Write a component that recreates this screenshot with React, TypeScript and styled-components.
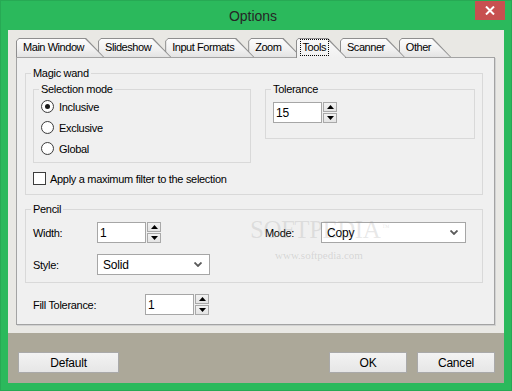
import React from 'react';
import styled, { createGlobalStyle } from 'styled-components';

const GlobalStyle = createGlobalStyle`
  html, body { margin: 0; padding: 0; background: #2bb95c; }
  body {
    font-family: "Liberation Sans", Arial, sans-serif;
    font-size: 11px;
    color: #000;
  }
  * { box-sizing: border-box; }
`;

const Window = styled.div`
  width: 512px;
  height: 391px;
  background: #2bb95c;
  border: 1px solid #27a954;
  display: flex;
  flex-direction: column;
  padding: 0 7px 7px 7px;
`;

const TitleBar = styled.div`
  height: 29px;
  margin: 0 -7px;
  padding-right: 6px;
  display: grid;
  grid-template-columns: 1fr auto 1fr;
  align-items: center;
`;

const Title = styled.div`
  grid-column: 2;
  font-size: 14px;
  color: #262626;
  padding-top: 1px;
`;

const CloseButton = styled.div`
  grid-column: 3;
  justify-self: end;
  align-self: start;
  width: 30px;
  height: 19px;
  background: #c75050;
  display: flex;
  align-items: center;
  justify-content: center;
`;

const Client = styled.div`
  flex: 1;
  background: #e9e8e4;
  display: flex;
  flex-direction: column;
`;

const TabArea = styled.div`
  padding: 8px 9px 0 8px;
`;

const TabStrip = styled.div`
  display: flex;
  height: 19px;
  align-items: flex-end;
`;

const Tab = styled.div<{ $active?: boolean; $z: number }>`
  position: relative;
  height: ${p => (p.$active ? 20 : 19)}px;
  margin-bottom: ${p => (p.$active ? -1 : 0)}px;
  align-self: flex-start;
  padding: 0 19px 0 6px;
  margin-right: -6px;
  z-index: ${p => (p.$active ? 50 : p.$z)};
  display: flex;
  align-items: flex-start;
  padding-top: 3px;
  white-space: nowrap;
  &::before {
    content: '';
    position: absolute;
    inset: 0;
    background: #8e8e8e;
    clip-path: polygon(0 3px, 3px 0, calc(100% - 18px) 0, 100% 19px, 100% 100%, 0 100%);
  }
  &::after {
    content: '';
    position: absolute;
    inset: 1px 1px 0 1px;
    background: ${p =>
      p.$active
        ? 'linear-gradient(#fafafa, #f0f0f0)'
        : 'linear-gradient(#fcfcfc 0%, #f1f1f1 55%, #e3e3e3 100%)'};
    clip-path: polygon(0 2px, 2px 0, calc(100% - 18px) 0, 100% 18px, 100% 100%, 0 100%);
  }
`;

const TabLabel = styled.span<{ $focus?: boolean }>`
  position: relative;
  z-index: 1;
  line-height: 13px;
  letter-spacing: -0.45px;
  outline: ${p => (p.$focus ? '1px dotted #000' : 'none')};
  outline-offset: 1px;
  padding: 0 1px;
`;

const Panel = styled.div`
  position: relative;
  height: 268px;
  background: #f0f0f0;
  border: 1px solid #a3a3a3;
  box-shadow: 1px 1px 0 #d2d2d2;
  padding: 9px 0 0 8px;
`;

const GroupBox = styled.fieldset<{ $w: number; $pad: string }>`
  width: ${p => p.$w}px;
  margin: 0;
  min-width: 0;
  border: 1px solid #d9d9d9;
  padding: ${p => p.$pad};
`;

const Legend = styled.legend`
  padding: 0 2px;
  margin-left: -2px;
  line-height: 13px;
  letter-spacing: -0.3px;
`;

const Row = styled.div<{ $gap?: number }>`
  display: flex;
  align-items: flex-start;
  gap: ${p => p.$gap ?? 0}px;
`;

const RadioRow = styled.label`
  height: 21px;
  display: flex;
  align-items: center;
  gap: 5px;
  letter-spacing: -0.3px;
`;

const RadioCircle = styled.span<{ $checked?: boolean }>`
  width: 13px;
  height: 13px;
  border-radius: 50%;
  border: 1px solid #3d3d3d;
  background: radial-gradient(circle at 40% 35%, #fff 0%, #fff 55%, #e8e8e8 100%);
  display: flex;
  align-items: center;
  justify-content: center;
  &::after {
    content: '';
    width: 5px;
    height: 5px;
    border-radius: 50%;
    background: ${p => (p.$checked ? '#1a1a1a' : 'transparent')};
  }
`;

const CheckRow = styled.label`
  margin-top: 9px;
  height: 13px;
  display: flex;
  align-items: center;
  gap: 4px;
  letter-spacing: -0.3px;
`;

const CheckBox = styled.span`
  width: 13px;
  height: 13px;
  border: 1px solid #3d3d3d;
  background: #fff;
`;

const NumberBox = styled.div`
  display: flex;
  gap: 1px;
  align-items: flex-start;
`;

const TextInput = styled.div`
  width: 49px;
  height: 21px;
  border: 1px solid #a6a6a6;
  background: #fff;
  padding-left: 2px;
  display: flex;
  align-items: center;
  font-size: 12px;
  letter-spacing: -0.2px;
`;

const SpinCol = styled.div`
  display: flex;
  flex-direction: column;
  gap: 1px;
`;

const SpinBtn = styled.div`
  width: 14px;
  height: 10px;
  border: 1px solid #a9a9a9;
  background: linear-gradient(#f2f2f2, #e4e4e4);
  display: flex;
  align-items: center;
  justify-content: center;
`;

const Grid = styled.div`
  display: grid;
  grid-template-columns: 64px 168px 56px auto;
  row-gap: 11px;
  align-items: center;
`;

const FieldLabel = styled.span`
  letter-spacing: -0.3px;
`;

const Select = styled.div<{ $w: number }>`
  width: ${p => p.$w}px;
  height: 21px;
  border: 1px solid #a6a6a6;
  background: #fff;
  display: flex;
  align-items: center;
  justify-content: space-between;
  padding: 0 7px 0 5px;
  font-size: 12px;
  letter-spacing: -0.2px;
`;

const FillRow = styled.div`
  margin: 11px 0 0 8px;
  display: flex;
  align-items: center;
`;

const FillLabel = styled.span`
  width: 112px;
  letter-spacing: -0.3px;
`;

const Watermark = styled.div`
  position: absolute;
  left: 233px;
  top: 159px;
  pointer-events: none;
  z-index: 5;
  display: flex;
  flex-direction: column;
  align-items: flex-start;
`;

const WatermarkBig = styled.span`
  font-family: "Liberation Serif", "Times New Roman", serif;
  font-size: 25px;
  letter-spacing: -0.5px;
  line-height: 25px;
  color: rgba(150, 150, 150, 0.22);
  position: relative;
  sup {
    font-size: 8px;
    position: absolute;
    right: -9px;
    top: -2px;
  }
`;

const WatermarkSmall = styled.span`
  margin: 7px 0 0 25px;
  font-family: "Liberation Serif", serif;
  font-size: 11px;
  color: rgba(150, 150, 150, 0.3);
`;

const ButtonBar = styled.div`
  margin-top: 8px;
  height: 50px;
  background: #aca899;
  display: flex;
  align-items: flex-start;
  padding: 19px 9px 0 10px;
  gap: 10px;
`;

const Button = styled.div<{ $w: number }>`
  width: ${p => p.$w}px;
  height: 21px;
  border: 1px solid #a9a9a9;
  background: linear-gradient(#f3f3f3, #e6e6e6);
  display: flex;
  align-items: center;
  justify-content: center;
  font-size: 12px;
  letter-spacing: -0.2px;
`;

const Spacer = styled.div`
  flex: 1;
`;

const Up = () => (
  <svg width="7" height="4" viewBox="0 0 7 4"><path d="M0 4 L3.5 0 L7 4 Z" fill="#000" /></svg>
);
const Down = () => (
  <svg width="7" height="4" viewBox="0 0 7 4"><path d="M0 0 L3.5 4 L7 0 Z" fill="#000" /></svg>
);
const Chevron = () => (
  <svg width="8" height="5" viewBox="0 0 8 5"><path d="M0.5 0.5 L4 4 L7.5 0.5" stroke="#5a5a5a" strokeWidth="1.8" fill="none" /></svg>
);

const Spinner: React.FC<{ value: string }> = ({ value }) => (
  <NumberBox>
    <TextInput>{value}</TextInput>
    <SpinCol>
      <SpinBtn><Up /></SpinBtn>
      <SpinBtn><Down /></SpinBtn>
    </SpinCol>
  </NumberBox>
);

const tabs = ['Main Window', 'Slideshow', 'Input Formats', 'Zoom', 'Tools', 'Scanner', 'Other'];

export default function App() {
  return (
    <>
      <GlobalStyle />
      <Window>
        <TitleBar>
          <Title>Options</Title>
          <CloseButton>
            <svg width="10" height="9" viewBox="0 0 10 9">
              <path d="M1 0.5 L9 8.5 M9 0.5 L1 8.5" stroke="#fff" strokeWidth="2" />
            </svg>
          </CloseButton>
        </TitleBar>
        <Client>
          <TabArea>
            <TabStrip>
              {tabs.map((t, i) => (
                <Tab key={t} $z={20 - i} $active={t === 'Tools'}>
                  <TabLabel $focus={t === 'Tools'}>{t}</TabLabel>
                </Tab>
              ))}
            </TabStrip>
            <Panel>
              <GroupBox $w={458} $pad="3px 7px 9px 7px">
                <Legend>Magic wand</Legend>
                <Row $gap={14}>
                  <GroupBox $w={218} $pad="0 7px 3px 7px">
                    <Legend>Selection mode</Legend>
                    <RadioRow><RadioCircle $checked />Inclusive</RadioRow>
                    <RadioRow><RadioCircle />Exclusive</RadioRow>
                    <RadioRow><RadioCircle />Global</RadioRow>
                  </GroupBox>
                  <GroupBox $w={210} $pad="6px 7px 15px 7px">
                    <Legend>Tolerance</Legend>
                    <Spinner value="15" />
                  </GroupBox>
                </Row>
                <CheckRow><CheckBox />Apply a maximum filter to the selection</CheckRow>
              </GroupBox>
              <div style={{ height: 8 }} />
              <GroupBox $w={458} $pad="6px 7px 7px 7px">
                <Legend>Pencil</Legend>
                <Grid>
                  <FieldLabel>Width:</FieldLabel>
                  <Spinner value="1" />
                  <FieldLabel>Mode:</FieldLabel>
                  <Select $w={145}>Copy<Chevron /></Select>
                  <FieldLabel>Style:</FieldLabel>
                  <Select $w={113}>Solid<Chevron /></Select>
                </Grid>
              </GroupBox>
              <FillRow>
                <FillLabel>Fill Tolerance:</FillLabel>
                <Spinner value="1" />
              </FillRow>
              <Watermark>
                <WatermarkBig>SOFTPEDIA<sup>™</sup></WatermarkBig>
                <WatermarkSmall>www.softpedia.com</WatermarkSmall>
              </Watermark>
            </Panel>
          </TabArea>
          <ButtonBar>
            <Button $w={101}>Default</Button>
            <Spacer />
            <Button $w={78}>OK</Button>
            <Button $w={78}>Cancel</Button>
          </ButtonBar>
        </Client>
      </Window>
    </>
  );
}
